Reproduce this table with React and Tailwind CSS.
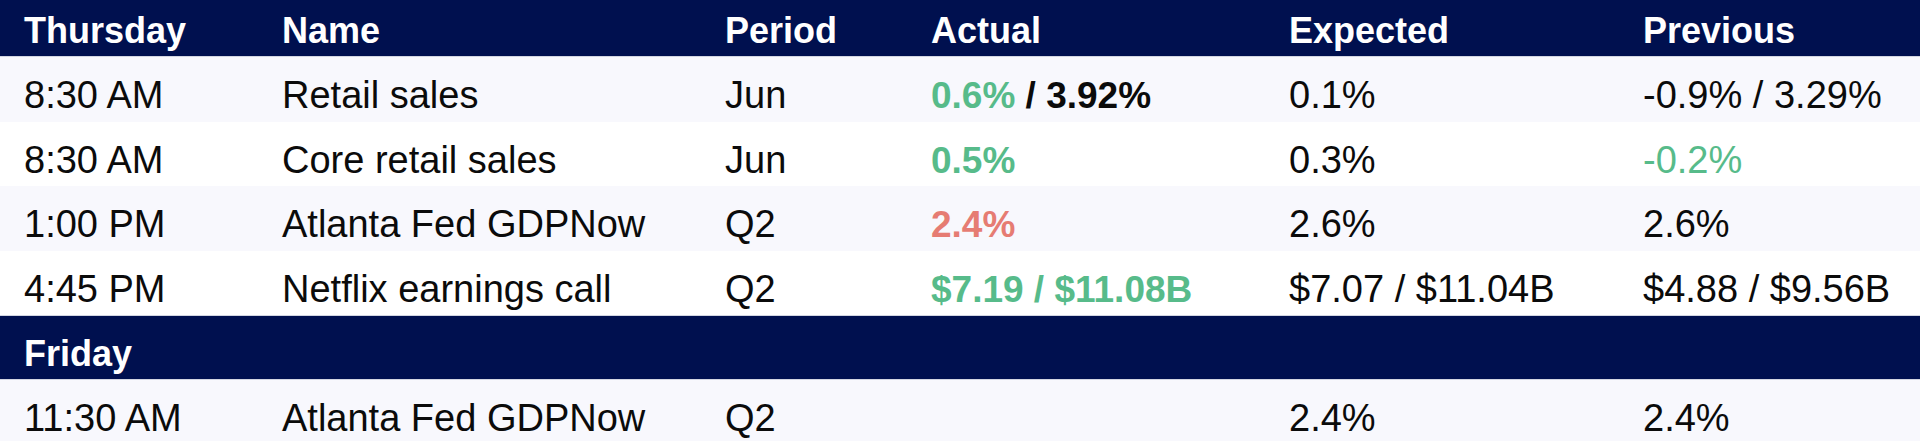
const GREEN = 'text-[#57bb8a]';
const RED = 'text-[#e67c73]';

// filas del calendario
const sections = [
  {
    day: 'Thursday',
    rows: [
      {
        time: '8:30 AM',
        name: 'Retail sales',
        period: 'Jun',
        actual: [
          { text: '0.6%', color: GREEN },
          { text: ' / 3.92%', color: 'text-[#0b0b0b]' },
        ],
        expected: '0.1%',
        previous: '-0.9% / 3.29%',
      },
      {
        time: '8:30 AM',
        name: 'Core retail sales',
        period: 'Jun',
        actual: [{ text: '0.5%', color: GREEN }],
        expected: '0.3%',
        previous: '-0.2%',
        previousColor: GREEN,
      },
      {
        time: '1:00 PM',
        name: 'Atlanta Fed GDPNow',
        period: 'Q2',
        actual: [{ text: '2.4%', color: RED }],
        expected: '2.6%',
        previous: '2.6%',
      },
      {
        time: '4:45 PM',
        name: 'Netflix earnings call',
        period: 'Q2',
        actual: [{ text: '$7.19 / $11.08B', color: GREEN }],
        expected: '$7.07 / $11.04B',
        previous: '$4.88 / $9.56B',
      },
    ],
  },
  {
    day: 'Friday',
    rows: [
      {
        time: '11:30 AM',
        name: 'Atlanta Fed GDPNow',
        period: 'Q2',
        actual: [],
        expected: '2.4%',
        previous: '2.4%',
      },
    ],
  },
];

const gridCols = 'grid grid-cols-[258px_443px_206px_358px_354px_1fr] items-baseline';
const cell = 'pl-6 whitespace-nowrap';

function DayHeader({ day, first }) {
  if (first) {
    return (
      <div className={`${gridCols} h-[57px] bg-[#00104f] border-b border-[#d3d6e2] pt-[4px] font-bold text-white text-[36px]`}>
        <div className={cell}>{day}</div>
        <div className={cell}>Name</div>
        <div className={cell}>Period</div>
        <div className={cell}>Actual</div>
        <div className={cell}>Expected</div>
        <div className={cell}>Previous</div>
      </div>
    );
  }
  return (
    <div className={`${gridCols} h-[65px] bg-[#00104f] border-y border-[#d3d6e2] pt-[11px] font-bold text-white text-[36px]`}>
      <div className={cell}>{day}</div>
    </div>
  );
}

function Row({ row, striped }) {
  return (
    <div className={`${gridCols} h-[64.5px] pt-[10px] text-[#0b0b0b] text-[38px] ${striped ? 'bg-[#f8f8fd]' : 'bg-white'}`}>
      <div className={cell}>{row.time}</div>
      <div className={cell}>{row.name}</div>
      <div className={cell}>{row.period}</div>
      <div className={`${cell} font-bold text-[37px]`}>
        {row.actual.map((part, i) => (
          <span key={i} className={part.color}>{part.text}</span>
        ))}
      </div>
      <div className={cell}>{row.expected}</div>
      <div className={`${cell} ${row.previousColor || ''}`}>{row.previous}</div>
    </div>
  );
}

function App() {
  return (
    <div className="w-[1920px] h-[441px] overflow-hidden bg-white font-['Liberation_Sans',Arial,sans-serif] leading-normal">
      {sections.map((section, s) => (
        <div key={section.day}>
          <DayHeader day={section.day} first={s === 0} />
          {section.rows.map((row, i) => (
            <Row key={i} row={row} striped={i % 2 === 0} />
          ))}
        </div>
      ))}
    </div>
  );
}

export default App;
